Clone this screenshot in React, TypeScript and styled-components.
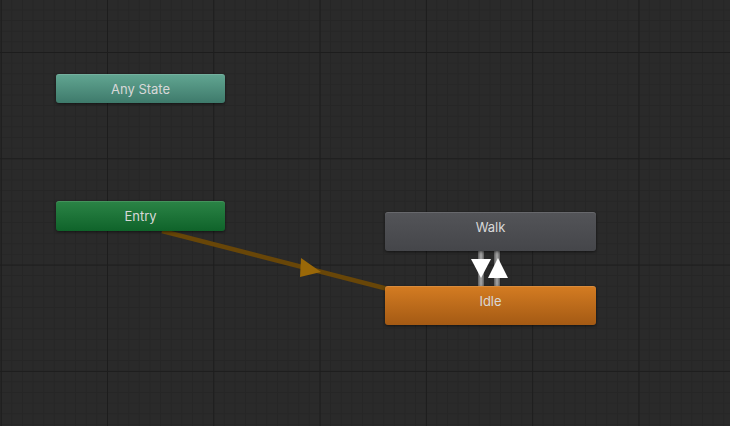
import React from "react";
import styled, { createGlobalStyle } from "styled-components";

const Global = createGlobalStyle`
  html, body { margin: 0; padding: 0; background: #282828; }
  body { font-family: Inter, "Noto Sans", sans-serif; }
`;

const Canvas = styled.div`
  position: relative;
  width: 730px;
  height: 426px;
  overflow: hidden;
  background-color: #2a2a2a;
  background-image:
    linear-gradient(to right, #1d1d1d 1px, transparent 1px),
    linear-gradient(to bottom, #1d1d1d 1px, transparent 1px),
    linear-gradient(to right, #262626 1px, transparent 1px),
    linear-gradient(to bottom, #262626 1px, transparent 1px);
  background-size: 106.3px 106.3px, 106.3px 106.3px, 10.63px 10.63px, 10.63px 10.63px;
  background-position: 0.7px 52px, 0.7px 52px, 0.7px 52px, 0.7px 52px;
`;

type Kind = "any" | "entry" | "state" | "default";

const palette: Record<Kind, [string, string]> = {
  any: ["#62a692", "#3e7a6b"],
  entry: ["#2b8446", "#0f632a"],
  state: ["#535458", "#45464a"],
  default: ["#d47c22", "#a45a14"],
};

const Node = styled.div<{ $kind: Kind; $x: number; $y: number; $w: number; $h: number }>`
  position: absolute;
  left: ${(p) => p.$x}px;
  top: ${(p) => p.$y}px;
  width: ${(p) => p.$w}px;
  height: ${(p) => p.$h}px;
  box-sizing: border-box;
  border-radius: 3px;
  background: linear-gradient(to bottom, ${(p) => palette[p.$kind][0]}, ${(p) => palette[p.$kind][1]});
  box-shadow: 0 1px 3px rgba(0, 0, 0, 0.55), inset 0 1px 0 rgba(255, 255, 255, 0.12);
  display: flex;
  justify-content: center;
  padding-top: 7px;
  color: #d8d8d8;
  font-size: 13px;
  line-height: 16px;
`;

const Wires = styled.svg`
  position: absolute;
  left: 0;
  top: 0;
`;

export default function App() {
  return (
    <>
      <Global />
      <Canvas>
        <Wires width={730} height={426} viewBox="0 0 730 426">
          <defs>
            <linearGradient id="wireA" x1="0" x2="1" y1="0" y2="0">
              <stop offset="0" stopColor="#5e5e5e" />
              <stop offset="0.5" stopColor="#a8a8a8" />
              <stop offset="1" stopColor="#5e5e5e" />
            </linearGradient>
          </defs>
          <line x1={162} y1={231} x2={388} y2={289} stroke="#684608" strokeWidth={4.5} />
          <polygon points="301,258 321,272 300,277" fill="#9a6808" />
          <rect x={478} y={251} width={6} height={36} fill="url(#wireA)" />
          <rect x={494} y={251} width={6} height={36} fill="url(#wireA)" />
          <polygon points="471,259 491,259 481,278" fill="#ffffff" />
          <polygon points="498,258 508,278 488,278" fill="#ffffff" />
        </Wires>
        <Node $kind="any" $x={56} $y={74} $w={169} $h={29}>Any State</Node>
        <Node $kind="entry" $x={56} $y={201} $w={169} $h={30}>Entry</Node>
        <Node $kind="state" $x={385} $y={212} $w={211} $h={39}>Walk</Node>
        <Node $kind="default" $x={385} $y={286} $w={211} $h={39}>Idle</Node>
      </Canvas>
    </>
  );
}
